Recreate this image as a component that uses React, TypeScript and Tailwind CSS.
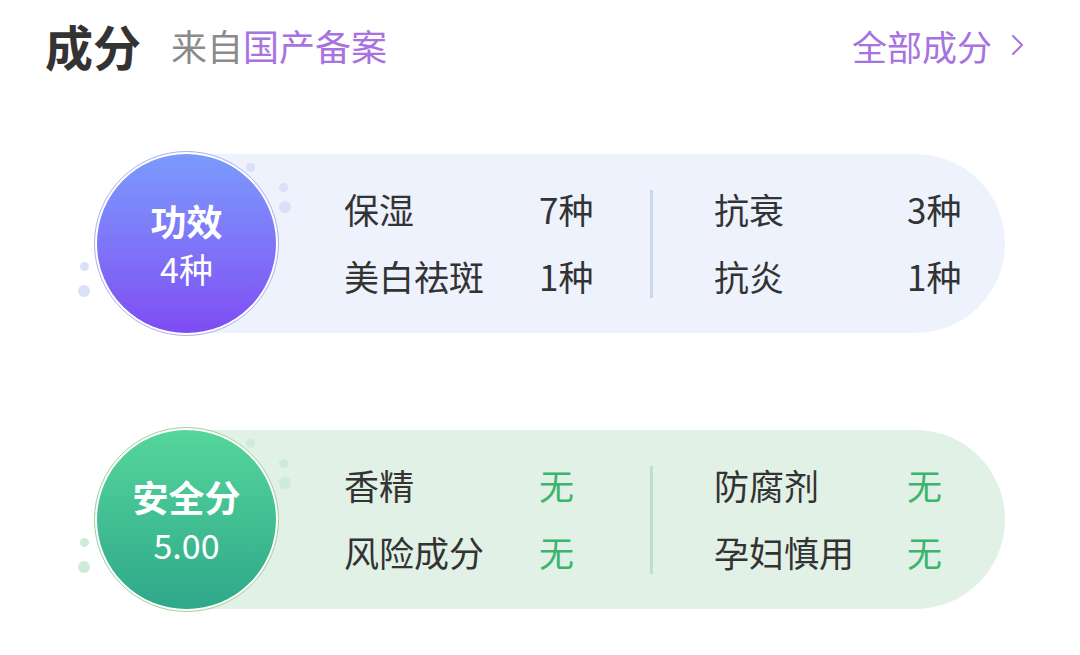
import React from "react";

type Row = { label: string; value: string };

const cards = [
  {
    title: "功效",
    sub: "4种",
    circle: "bg-gradient-to-b from-[#7a9afc] to-[#7f4bf3]",
    ring: "border-[#a9b0ea]",
    panel: "bg-[#edf2fd]",
    dot: "bg-[#d9e0f7]",
    divider: "bg-[#c9d8ec]",
    valueColor: "text-[#333333]",
    left: [
      { label: "保湿", value: "7种" },
      { label: "美白祛斑", value: "1种" },
    ] as Row[],
    right: [
      { label: "抗衰", value: "3种" },
      { label: "抗炎", value: "1种" },
    ] as Row[],
  },
  {
    title: "安全分",
    sub: "5.00",
    circle: "bg-gradient-to-b from-[#55d69b] to-[#2ea88a]",
    ring: "border-[#9fcf9a]",
    panel: "bg-[#e1f1e5]",
    dot: "bg-[#cdebd8]",
    divider: "bg-[#b9e0c8]",
    valueColor: "text-[#3cb46e]",
    left: [
      { label: "香精", value: "无" },
      { label: "风险成分", value: "无" },
    ] as Row[],
    right: [
      { label: "防腐剂", value: "无" },
      { label: "孕妇慎用", value: "无" },
    ] as Row[],
  },
];

function Column({ rows, valueColor, width, labelW }: { rows: Row[]; valueColor: string; width: string; labelW: string }) {
  return (
    <div className={`flex flex-col gap-[32px] mb-[4px] ${width}`}>
      {rows.map((r) => (
        <div key={r.label} className="flex items-center h-[35px] text-[35px] leading-none whitespace-nowrap">
          <span className={`${labelW} shrink-0 text-[#333333]`}>{r.label}</span>
          <span className={valueColor}>{r.value}</span>
        </div>
      ))}
    </div>
  );
}

export default function App() {
  return (
    <div
      className="w-[1080px] h-[655px] bg-white overflow-hidden"
      style={{ fontFamily: '"Noto Sans CJK SC", "Noto Sans", sans-serif' }}
    >
      {/* header */}
      <div className="flex items-center justify-between pl-[45px] pr-[55px] pt-[14px] h-[76px]">
        <div className="flex items-center">
          <span className="text-[48px] font-bold text-[#333333] leading-none">成分</span>
          <span className="ml-[30px] text-[36px] leading-none text-[#8a8a8a]">
            来自<span className="text-[#a872e0]">国产备案</span>
          </span>
        </div>
        <div className="flex items-center text-[35px] leading-none text-[#a872e0]">
          全部成分
          <svg width="14" height="22" viewBox="0 0 14 22" className="ml-[19px]" fill="none">
            <path d="M2 2 L11 11 L2 20" stroke="#a872e0" strokeWidth="2" strokeLinecap="round" strokeLinejoin="round" />
          </svg>
        </div>
      </div>

      <div className="flex flex-col gap-[91px] pl-[94px] pt-[75px]">
        {cards.map((c) => (
          <div key={c.title} className="relative flex items-center w-[911px]">
            {/* decorative dots */}
            <span className={`absolute left-[152px] top-[12px] w-[9px] h-[9px] rounded-full ${c.dot}`} />
            <span className={`absolute left-[185px] top-[32px] w-[9px] h-[9px] rounded-full ${c.dot}`} />
            <span className={`absolute left-[185px] top-[50px] w-[12px] h-[12px] rounded-full ${c.dot}`} />
            <span className={`absolute left-[-14px] top-[111px] w-[9px] h-[9px] rounded-full ${c.dot}`} />
            <span className={`absolute left-[-16px] top-[134px] w-[12px] h-[12px] rounded-full ${c.dot}`} />

            <div className={`relative z-10 w-[185px] h-[185px] shrink-0 rounded-full border ${c.ring} bg-white p-[2px]`}>
              <div className={`w-full h-full rounded-full ${c.circle} flex flex-col items-center justify-center text-white`}>
                <span className="text-[36px] font-bold leading-none">{c.title}</span>
                <span className="text-[34px] leading-none mt-[14px]">{c.sub}</span>
              </div>
            </div>

            <div className={`ml-[-93px] flex-1 h-[179px] rounded-r-full ${c.panel} flex items-center pl-[158px]`}>
              <Column rows={c.left} valueColor={c.valueColor} width="w-[306px]" labelW="w-[195px]" />
              <div className={`w-[3px] h-[108px] mr-[61px] ${c.divider}`} />
              <Column rows={c.right} valueColor={c.valueColor} width="w-[250px]" labelW="w-[193px]" />
            </div>
          </div>
        ))}
      </div>
    </div>
  );
}
